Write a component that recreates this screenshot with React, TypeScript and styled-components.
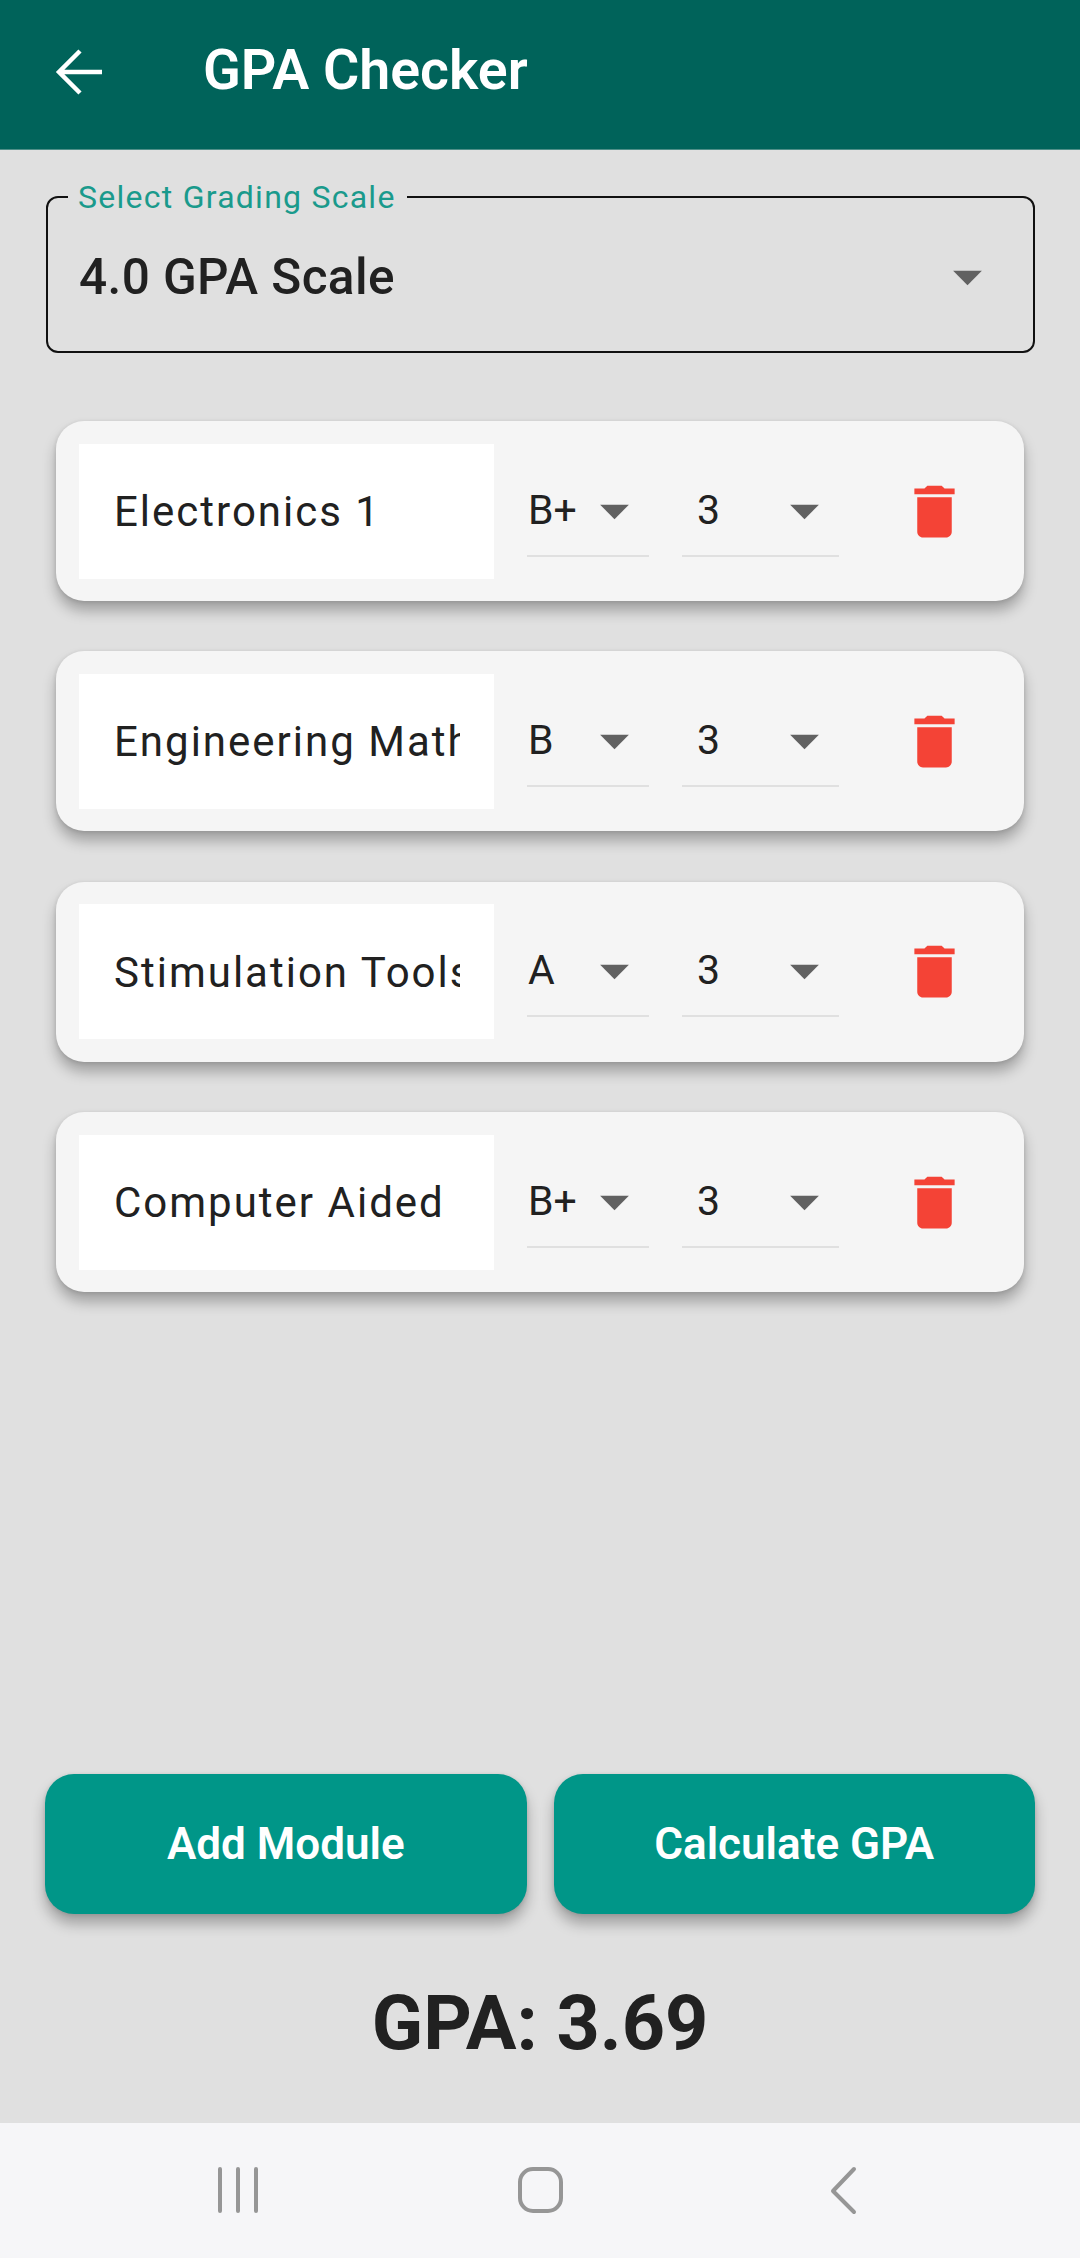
import React from 'react';
import styled, { createGlobalStyle } from 'styled-components';

const GlobalStyle = createGlobalStyle`
  html, body {
    margin: 0;
    padding: 0;
    background: #e0e0e0;
  }
  * {
    box-sizing: border-box;
  }
`;

const Page = styled.div`
  width: 1080px;
  height: 2258px;
  display: flex;
  flex-direction: column;
  background: #e0e0e0;
  font-family: Roboto, sans-serif;
  color: #212121;
  overflow: hidden;
`;

const AppBar = styled.header`
  height: 150px;
  flex: none;
  display: flex;
  align-items: center;
  background: #00635a;
  color: #fff;
  padding: 0 0 8px 54px;
  border-bottom: 1px solid #4f8f88;
`;

const BackIcon = styled.svg`
  width: 50px;
  height: 50px;
  flex: none;
  margin-top: 2px;
  fill: none;
  stroke: #fff;
  stroke-width: 4.5;
`;

const Title = styled.h1`
  margin: 0 0 0 99px;
  font-size: 55.5px;
  font-weight: 600;
`;

const Main = styled.main`
  flex: 1;
  display: flex;
  flex-direction: column;
`;

const ScaleField = styled.fieldset`
  margin: 29px 45px 0 46px;
  padding: 0 31px;
  height: 174px;
  border: 2.5px solid #111;
  border-radius: 12px;
`;

const ScaleLegend = styled.legend`
  margin-left: -11px;
  padding: 0 11px 0 10px;
  font-size: 32px;
  line-height: 36px;
  letter-spacing: 1.25px;
  color: #1a9a8c;
`;

const ScaleRow = styled.div`
  height: 136px;
  display: flex;
  align-items: center;
  justify-content: space-between;
`;

const ScaleValue = styled.span`
  font-size: 49.5px;
  font-weight: 500;
  letter-spacing: 0.4px;
  margin-top: -13px;
`;

const ScaleCaret = styled.svg`
  width: 69px;
  height: 69px;
  flex: none;
  margin: -13px 0 0 0;
  fill: #616161;
`;

const ModuleList = styled.div`
  margin: 68px 56px 0;
  display: flex;
  flex-direction: column;
  gap: 50.4px;
`;

const ModuleCard = styled.div`
  height: 180px;
  padding: 0 0 0 23px;
  display: flex;
  align-items: center;
  background: #f5f5f5;
  border-radius: 28px;
  box-shadow: 0 10px 14px rgba(0, 0, 0, 0.28), 0 1px 4px rgba(0, 0, 0, 0.12);
`;

const NameField = styled.div`
  width: 415px;
  height: 135px;
  flex: none;
  display: flex;
  align-items: center;
  padding: 2px 34px 0 35px;
  background: #fff;
`;

const NameText = styled.div`
  overflow: hidden;
  white-space: nowrap;
  font-size: 42px;
  line-height: 56px;
  letter-spacing: 2px;
`;

const DropDown = styled.div<{ $width: number; $inset: number }>`
  width: ${(p) => p.$width}px;
  margin-left: 33px;
  height: 91px;
  flex: none;
  display: flex;
  align-items: center;
  justify-content: space-between;
  padding: 0 0 0 ${(p) => p.$inset}px;
  border-bottom: 2px solid #e0e0e0;
`;

const DropText = styled.span`
  font-size: 41px;
  padding-bottom: 1px;
`;

const CardCaret = styled.svg`
  width: 69px;
  height: 69px;
  flex: none;
  fill: #616161;
`;

const TrashIcon = styled.svg`
  width: 69px;
  height: 69px;
  margin-left: 61px;
  flex: none;
  fill: #f44336;
`;

const ActionRow = styled.div`
  margin: auto 45px 0;
  display: grid;
  grid-template-columns: 1fr 1fr;
  gap: 27px;
`;

const ActionButton = styled.button`
  height: 140px;
  border: 0;
  border-radius: 29px;
  background: #009688;
  color: #fff;
  font-family: Roboto, sans-serif;
  font-size: 44px;
  font-weight: 600;
  box-shadow: 0 10px 14px rgba(0, 0, 0, 0.28), 0 1px 4px rgba(0, 0, 0, 0.12);
`;

const Result = styled.div`
  height: 209px;
  padding-top: 8px;
  display: flex;
  align-items: center;
  justify-content: center;
  font-size: 75.5px;
  font-weight: 700;
`;

const NavBar = styled.nav`
  height: 135px;
  flex: none;
  background: #f6f6f8;
`;

const NavIcons = styled.svg`
  display: block;
  width: 1080px;
  height: 135px;
  fill: none;
  stroke: #969696;
  stroke-width: 4;
  stroke-linecap: round;
  stroke-linejoin: round;
`;

const modules = [
  { name: 'Electronics 1', grade: 'B+', credits: '3' },
  { name: 'Engineering Mathematics', grade: 'B', credits: '3' },
  { name: 'Stimulation Tools', grade: 'A', credits: '3' },
  { name: 'Computer Aided ', grade: 'B+', credits: '3' },
];

const App = () => {
  return (
    <Page>
      <GlobalStyle />
      <AppBar>
        <BackIcon viewBox="0 0 50 50">
          <path d="M48 25H6M26 4L5 25l21 21" />
        </BackIcon>
        <Title>GPA Checker</Title>
      </AppBar>
      <Main>
        <ScaleField>
          <ScaleLegend>Select Grading Scale</ScaleLegend>
          <ScaleRow>
            <ScaleValue>4.0 GPA Scale</ScaleValue>
            <ScaleCaret viewBox="0 0 24 24">
              <path d="M7 10l5 5 5-5z" />
            </ScaleCaret>
          </ScaleRow>
        </ScaleField>
        <ModuleList>
          {modules.map((item, index) => (
            <ModuleCard key={index}>
              <NameField>
                <NameText>{item.name}</NameText>
              </NameField>
              <DropDown $width={122} $inset={1}>
                <DropText>{item.grade}</DropText>
                <CardCaret viewBox="0 0 24 24">
                  <path d="M7 10l5 5 5-5z" />
                </CardCaret>
              </DropDown>
              <DropDown $width={157} $inset={15}>
                <DropText>{item.credits}</DropText>
                <CardCaret viewBox="0 0 24 24">
                  <path d="M7 10l5 5 5-5z" />
                </CardCaret>
              </DropDown>
              <TrashIcon viewBox="0 0 24 24">
                <path d="M6 19c0 1.1.9 2 2 2h8c1.1 0 2-.9 2-2V7H6v12zM19 4h-3.5l-1-1h-5l-1 1H5v2h14V4z" />
              </TrashIcon>
            </ModuleCard>
          ))}
        </ModuleList>
        <ActionRow>
          <ActionButton>Add Module</ActionButton>
          <ActionButton>Calculate GPA</ActionButton>
        </ActionRow>
        <Result>GPA: 3.69</Result>
      </Main>
      <NavBar>
        <NavIcons viewBox="0 0 1080 135">
          <path d="M220 46v42M238 46v42M256 46v42" />
          <rect x="520" y="46" width="41" height="42" rx="13" />
          <path d="M854 46l-21 22 21 21" />
        </NavIcons>
      </NavBar>
    </Page>
  );
};

export default App;
